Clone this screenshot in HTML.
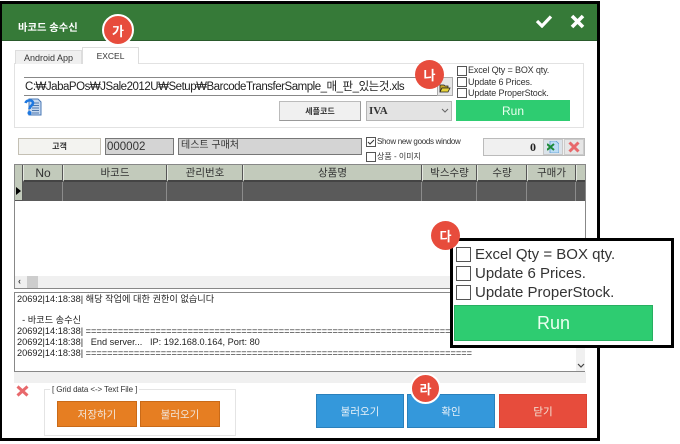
<!DOCTYPE html>
<html><head><meta charset="utf-8">
<style>
html,body{margin:0;padding:0;background:#fff;}
#r{position:relative;width:680px;height:444px;overflow:hidden;background:#fff;font-family:"Liberation Sans","Noto Sans CJK KR",sans-serif;color:#222;}
#r div{position:absolute;box-sizing:border-box;white-space:nowrap;}
.c{display:flex;align-items:center;justify-content:center;}
.cb{border:1px solid #555;background:#fff;width:10px;height:10px;}
.t{font-size:9px;line-height:11px;color:#333;letter-spacing:-.15px;}
.h{background:#c2cabb;border-left:1px solid #e4e8e0;border-right:1px solid #555;border-bottom:2px solid #444;height:17px;top:165px;font-size:10.500px;color:#333;}
.d{background:#5a5a5a;border-right:1px solid #8c8c8c;height:19px;top:182px;}
.b{color:#f2e6da;font-size:10.500px;}
.bd{border-radius:50%;background:#e74c3c;color:#fff;font-weight:bold;font-size:13px;}
.log{font-size:9.200px;line-height:11px;color:#222;left:17px;}
</style></head><body>
<div id="r">
<!-- window -->
<div style="left:0;top:1px;width:600px;height:440px;border:3px solid #000;border-left-width:2px;background:#fff"></div>
<div style="left:2px;top:4px;width:595px;height:37px;background:#367a38;border-bottom:1px solid #2a5a2c"></div>
<div class="t" style="left:18px;top:23px;color:#fff;font-size:10.300px;font-weight:bold;letter-spacing:0">바코드 송수신</div>
<svg style="position:absolute;left:535px;top:14px" width="18" height="14" viewBox="0 0 18 14"><path d="M2 7l5 5L16 2.500" fill="none" stroke="#fff" stroke-width="3.200"/></svg>
<svg style="position:absolute;left:570px;top:14px" width="15" height="15" viewBox="0 0 15 15"><path d="M2 2l11 11M13 2L2 13" fill="none" stroke="#fff" stroke-width="3.600"/></svg>

<!-- tabs -->
<div style="left:14px;top:63px;width:570px;height:65px;border:1px solid #e2e2e2;background:#fff"></div>
<div class="c" style="left:15px;top:50px;width:67px;height:14px;background:#f0f0f0;border:1px solid #ddd;border-bottom:0;font-size:9px;color:#333">Android App</div>
<div class="c" style="left:82px;top:47px;width:57px;height:17px;background:#fff;border:1px solid #ddd;border-bottom:0;font-size:8.500px;color:#333">EXCEL</div>

<!-- path -->
<div style="left:24px;top:77px;width:414px;height:19px;border-top:1px solid #888;border-bottom:1px solid #888"></div>
<div style="left:25px;top:80px;font-size:11.500px;line-height:15px;color:#222;letter-spacing:-.48px">C:₩JabaPOs₩JSale2012U₩Setup₩BarcodeTransferSample_매_판_있는것.xls</div>
<div class="c" style="left:437px;top:77px;width:16px;height:19px;background:#e6e6e6;border:1px solid #aaa"></div>
<svg style="position:absolute;left:439px;top:82px" width="12" height="11" viewBox="0 0 12 11"><path d="M1 3h4l1 1h3v2H3L1 10z" fill="#c9a92a" stroke="#222" stroke-width=".8"/><path d="M3 6h8L9 10H1z" fill="#e6d23a" stroke="#222" stroke-width=".8"/></svg>
<svg style="position:absolute;left:24px;top:98px" width="18" height="18" viewBox="0 0 18 18"><path d="M5 1h9l3 3v13H5z" fill="#c6d8ee" stroke="#4a78b5" stroke-width="1"/><path d="M8 5h7M8 7.500h7M8 10h7M8 12.500h7M8 15h7" stroke="#4f78ad"/><path d="M1.500 5c1-3.500 7.500-3.500 7.500 0 0 2.500-3.500 3-3.500 6" fill="none" stroke="#1e78e0" stroke-width="2.600"/><circle cx="5.500" cy="15" r="2" fill="#1e78e0"/></svg>
<div class="c" style="left:279px;top:101px;width:82px;height:20px;background:#f0f0f0;border:1px solid #bbb;border-right-color:#999;border-bottom-color:#999;font-size:8px;font-weight:bold;color:#333">세플코드</div>
<div style="left:366px;top:101px;width:86px;height:20px;background:#e3e3e3;border:1px solid #b5b5b5"></div>
<div style="left:369px;top:104px;font:bold 11px/15px 'Liberation Serif',serif;color:#333">IVA</div>
<svg style="position:absolute;left:441px;top:108px" width="8" height="6" viewBox="0 0 8 6"><path d="M1 1l3 3 3-3" fill="none" stroke="#666"/></svg>

<div class="cb" style="left:457px;top:66px"></div>
<div class="t" style="left:468px;top:65px">Excel Qty = BOX qty.</div>
<div class="cb" style="left:457px;top:77px"></div>
<div class="t" style="left:468px;top:77px">Update 6 Prices.</div>
<div class="cb" style="left:457px;top:88px"></div>
<div class="t" style="left:468px;top:88px">Update ProperStock.</div>
<div class="c" style="left:456px;top:100px;width:114px;height:21px;background:#2ecc71;color:#eafff0;font-size:12px">Run</div>

<!-- customer -->
<div class="c" style="left:18px;top:138px;width:83px;height:17px;background:#f3f3f0;border:1px solid #c4c0b4;font-size:8px;font-weight:bold;color:#333">고객</div>
<div style="left:105px;top:138px;width:69px;height:17px;background:#d4d4d4;border:1px solid #777;font-size:11.500px;line-height:17px;padding-left:1px;color:#333">000002</div>
<div style="left:178px;top:138px;width:184px;height:17px;background:#d4d4d4;border:1px solid #777;font-size:10px;line-height:14px;padding-left:2px;color:#333">테스트 구매처</div>
<div class="cb" style="left:366px;top:137px"></div>
<svg style="position:absolute;left:366px;top:137px" width="10" height="10" viewBox="0 0 10 10"><path d="M2 5l2 2 4-4" fill="none" stroke="#333"/></svg>
<div class="t" style="left:377px;top:136px;font-size:8px;letter-spacing:-.3px">Show new goods window</div>
<div class="cb" style="left:366px;top:152px"></div>
<div class="t" style="left:377px;top:151px;font-size:8px;letter-spacing:0">상품 - 이미지</div>
<div style="left:483px;top:138px;width:102px;height:18px;background:#f0f0f0;border:1px solid #bbb"></div>
<div style="left:530px;top:139px;font:bold 12px/16px 'Liberation Serif',serif;color:#222">0</div>
<div class="c" style="left:543px;top:139px;width:20px;height:16px;background:#dbe3ea;border:1px solid #c8c8c8"></div>
<svg style="position:absolute;left:547px;top:141px" width="12" height="12" viewBox="0 0 12 12"><path d="M3 0h6l3 3v9H3z" fill="#bcdcf5" stroke="#5b9bd0" stroke-width=".8"/><path d="M0 3l7 6M7 3L0 9" stroke="#1d8a3a" stroke-width="2"/></svg>
<div class="c" style="left:564px;top:139px;width:20px;height:16px;background:#e6e6e6;border:1px solid #ccc"></div>
<svg style="position:absolute;left:568px;top:141px" width="12" height="12" viewBox="0 0 12 12"><path d="M1.500 1.500l9 9M10.500 1.500l-9 9" stroke="#e8696c" stroke-width="3"/></svg>

<!-- grid -->
<div style="left:14px;top:164px;width:572px;height:125px;border:1px solid #888;background:#fff"></div>
<div style="left:15px;top:165px;width:8px;height:36px;background:#c2cabb;border-right:1px solid #555;border-bottom:1px solid #555"></div>
<svg style="position:absolute;left:16px;top:187px" width="5" height="8" viewBox="0 0 5 8"><path d="M0 0l5 4-5 4z" fill="#000"/></svg>
<div class="h c" style="left:23px;width:40px;font-size:12px">No</div>
<div class="h c" style="left:63px;width:104px">바코드</div>
<div class="h c" style="left:167px;width:76px">관리번호</div>
<div class="h c" style="left:243px;width:179px">상품명</div>
<div class="h c" style="left:422px;width:55px">박스수량</div>
<div class="h c" style="left:477px;width:50px">수량</div>
<div class="h c" style="left:527px;width:49px">구매가</div>
<div class="h" style="left:576px;width:9px;border-right:0"></div>
<div class="d" style="left:23px;width:40px"></div>
<div class="d" style="left:63px;width:104px"></div>
<div class="d" style="left:167px;width:76px"></div>
<div class="d" style="left:243px;width:179px"></div>
<div class="d" style="left:422px;width:55px"></div>
<div class="d" style="left:477px;width:50px"></div>
<div class="d" style="left:527px;width:49px"></div>
<div class="d" style="left:576px;width:9px;border-right:0"></div>
<div style="left:15px;top:276px;width:570px;height:12px;background:#f0f0f0"></div>
<div style="left:27px;top:276px;width:11px;height:12px;background:#cdcdcd"></div>
<div style="left:18px;top:276px;font-size:9px;line-height:11px;color:#444;font-weight:bold">‹</div>

<!-- log -->
<div style="left:14px;top:292px;width:571px;height:80px;border:1px solid #888;background:#fff"></div>
<div class="log" style="top:294px">20692|14:18:38| 해당 작업에 대한 권한이 없습니다</div>
<div class="log" style="top:315px">&nbsp; - 바코드 송수신</div>
<div class="log" style="top:326px">20692|14:18:38| ========================================================================</div>
<div class="log" style="top:337px">20692|14:18:38| &nbsp; End server... &nbsp; IP: 192.168.0.164, Port: 80</div>
<div class="log" style="top:348px">20692|14:18:38| ========================================================================</div>
<div style="left:576px;top:293px;width:9px;height:78px;background:#f0f0f0"></div>
<svg style="position:absolute;left:577px;top:363px" width="8" height="6" viewBox="0 0 8 6"><path d="M1 1l3 3 3-3" fill="none" stroke="#444" stroke-width="1.200"/></svg>
<div style="left:14px;top:372px;width:572px;height:11px;background:#f0f0f0"></div>

<!-- bottom -->
<svg style="position:absolute;left:16px;top:385px" width="13" height="12" viewBox="0 0 13 12"><path d="M1.500 1.500l10 9M11.500 1.500l-10 9" stroke="#e8696c" stroke-width="3"/></svg>
<div style="left:44px;top:389px;width:192px;height:47px;border:1px solid #e4e4e4"></div>
<div style="left:50px;top:384px;background:#fff;padding:0 2px;font-size:8px;letter-spacing:-.1px;line-height:11px;color:#333">[ Grid data &lt;-&gt; Text File ]</div>
<div class="c b" style="left:57px;top:401px;width:80px;height:26px;background:#e67e22;border:1px solid #c96a18">저장하기</div>
<div class="c b" style="left:140px;top:401px;width:80px;height:26px;background:#e67e22;border:1px solid #c96a18">불러오기</div>
<div class="c b" style="left:316px;top:394px;width:88px;height:34px;background:#3498db;border:1px solid #2a80bb;color:#e6f0f8">불러오기</div>
<div class="c b" style="left:407px;top:394px;width:88px;height:34px;background:#3498db;border:1px solid #2a80bb;color:#e6f0f8">확인</div>
<div class="c b" style="left:499px;top:394px;width:88px;height:34px;background:#e74c3c;border:1px solid #dc4434">닫기</div>

<!-- overlay -->
<div style="left:450px;top:238px;width:224px;height:110px;border:3px solid #000;background:#fff"></div>
<div class="cb" style="left:456px;top:247px;width:15px;height:15px"></div>
<div style="left:475px;top:246px;font-size:15px;line-height:18px;color:#333">Excel Qty = BOX qty.</div>
<div class="cb" style="left:456px;top:266px;width:15px;height:15px"></div>
<div style="left:475px;top:265px;font-size:15px;line-height:18px;color:#333">Update 6 Prices.</div>
<div class="cb" style="left:456px;top:285px;width:15px;height:15px"></div>
<div style="left:475px;top:284px;font-size:15px;line-height:18px;color:#333">Update ProperStock.</div>
<div class="c" style="left:454px;top:305px;width:199px;height:36px;background:#2ecc71;border:1px solid #27ae60;color:#eafff0;font-size:18px">Run</div>

<!-- badges -->
<div class="bd c" style="left:102px;top:14px;width:32px;height:32px;border:2px solid #fff">가</div>
<div class="bd c" style="left:415px;top:60px;width:29px;height:29px">나</div>
<div class="bd c" style="left:431px;top:221px;width:29px;height:29px">다</div>
<div class="bd c" style="left:410px;top:373px;width:31px;height:31px;border:2px solid #fff">라</div>
</div>
</body></html>
